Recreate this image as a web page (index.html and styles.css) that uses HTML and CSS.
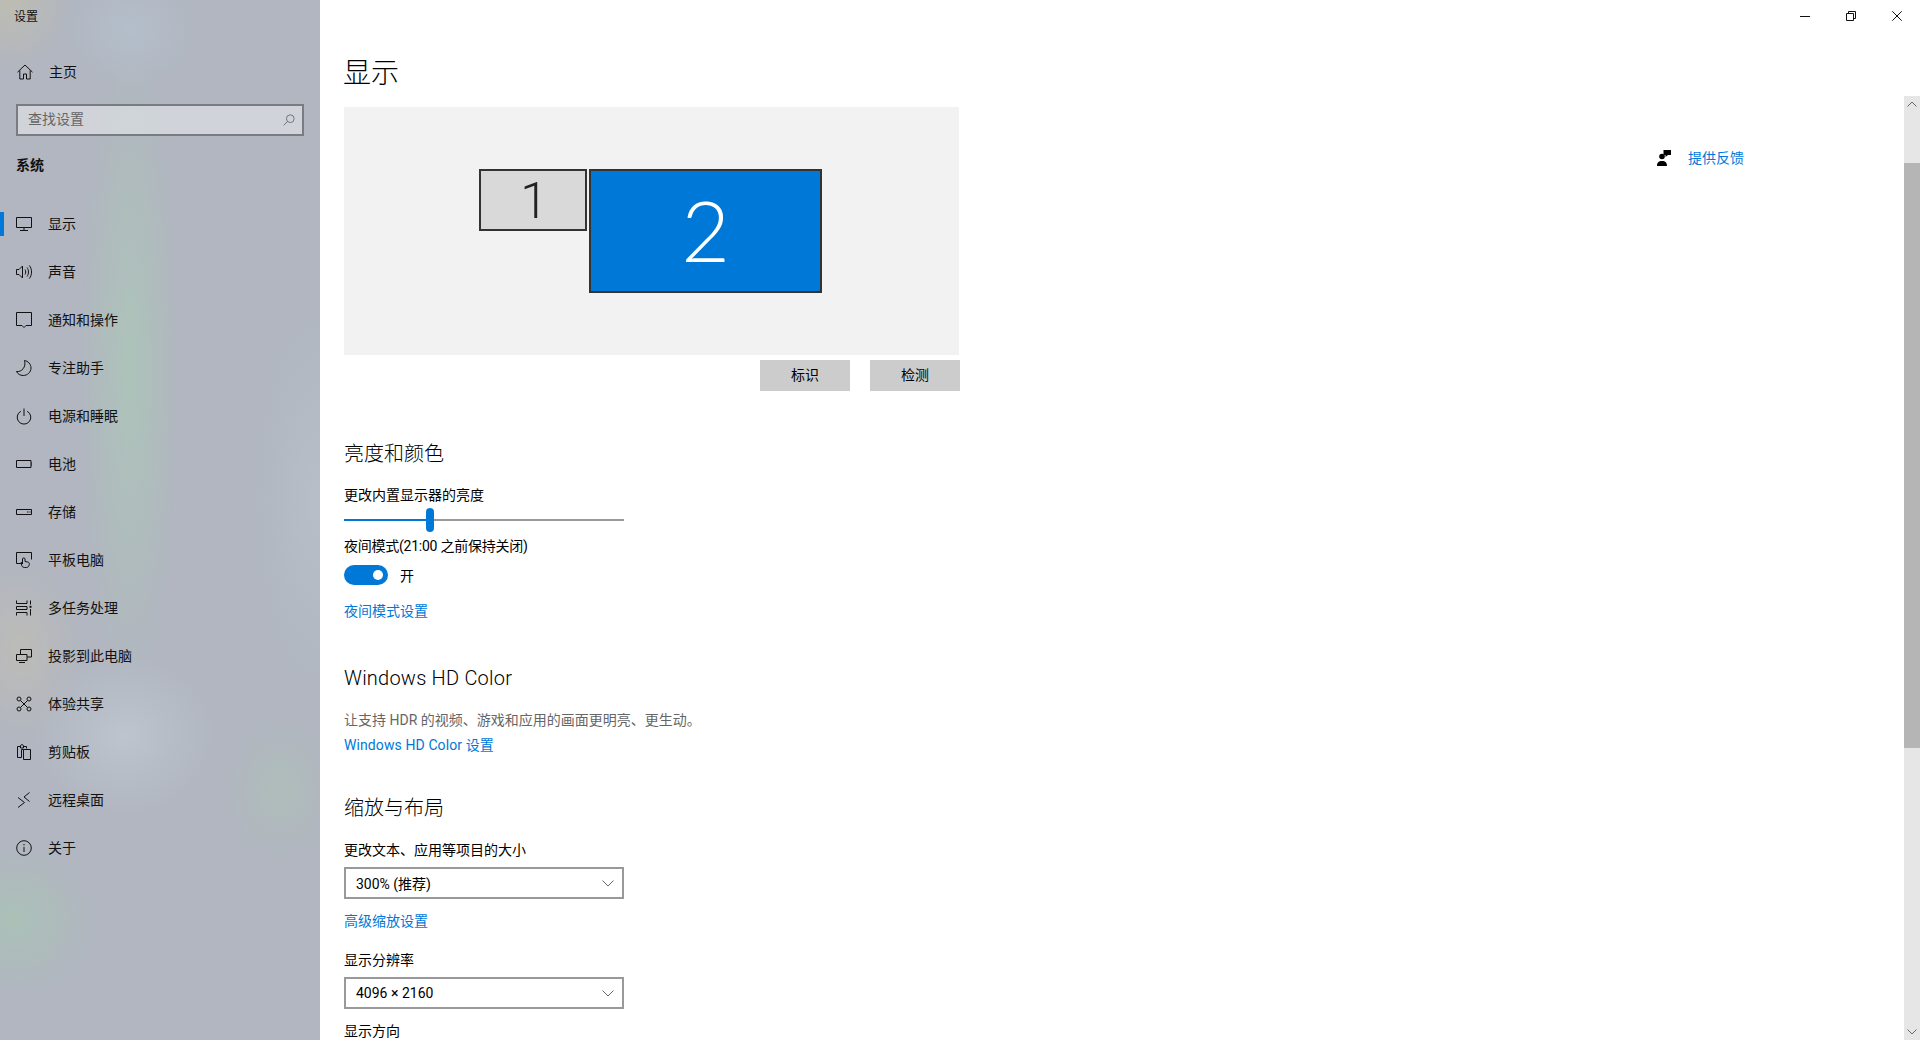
FILE: index.html
```html
<!DOCTYPE html>
<html lang="zh-CN">
<head>
<meta charset="utf-8">
<title>设置</title>
<link rel="stylesheet" href="styles.css">
</head>
<body>
<div class="window">
  <aside class="sidebar">
    <div class="app-title">设置</div>
    <div class="nav-item home-item">
      <svg class="icon" viewBox="0 0 16 16"><path d="M.5 8.2 8 1l7.500 7.200M2.800 6.500V15H6.500V10H9.500V15H13.200V6.500"/></svg>
      <span>主页</span>
    </div>
    <div class="search">
      <span>查找设置</span>
      <svg class="search-icon" viewBox="0 0 14 14"><circle cx="8.500" cy="5.500" r="4.500"/><path d="M5.300 8.700.8 13.200"/></svg>
    </div>
    <div class="group-title">系统</div>
    <nav class="nav">
      <div class="nav-item selected">
        <svg class="icon" viewBox="0 0 16 16"><path d="M.5 1.500h15v10H.5zM8 11.500v3M4 14.500h8"/></svg>
        <span>显示</span>
      </div>
      <div class="nav-item">
        <svg class="icon" viewBox="0 0 16 16"><path d="M.5 5.500h2.500L6.500 2v12L3 10.500H.5zM9 5.500c1 1.500 1 3.500 0 5M11 3.500c2 2.500 2 6.500 0 9M13.300 1.500c3 3.500 3 9.500 0 13"/></svg>
        <span>声音</span>
      </div>
      <div class="nav-item">
        <svg class="icon" viewBox="0 0 16 16"><path d="M.5.5h15v13H10L8 15.500 6 13.500H.5z"/></svg>
        <span>通知和操作</span>
      </div>
      <div class="nav-item">
        <svg class="icon" viewBox="0 0 16 16"><path d="M8.500.5C12 1 15 4.200 15 8c0 4.200-3.500 7.500-7.800 7.500-3 0-5.500-1.500-6.700-4 5 .8 10-4.500 8-11z"/></svg>
        <span>专注助手</span>
      </div>
      <div class="nav-item">
        <svg class="icon" viewBox="0 0 16 16"><path d="M8 .5v7.500M4.800 3.300a6.800 6.800 0 1 0 6.400 0"/></svg>
        <span>电源和睡眠</span>
      </div>
      <div class="nav-item">
        <svg class="icon" viewBox="0 0 16 16"><path d="M.5 4.500h14.500v7H.5zM15 7h1M15 9h1"/></svg>
        <span>电池</span>
      </div>
      <div class="nav-item">
        <svg class="icon" viewBox="0 0 16 16"><path d="M.5 5.500h15v5H.5zM11 8h1.500M13.500 8h1"/></svg>
        <span>存储</span>
      </div>
      <div class="nav-item">
        <svg class="icon" viewBox="0 0 16 16"><path d="M7 11.500H.5V.5h15v7M8.500 15.500c-2 0-3-1.500-3-3.500l-.5-1.500 1.500.5V7c0-1.500 2.500-1.500 2.500 0v2.500l2.500.5c1.500.3 2 1 1.800 2.500-.3 2-1.500 3-3 3z"/></svg>
        <span>平板电脑</span>
      </div>
      <div class="nav-item">
        <svg class="icon" viewBox="0 0 16 16"><path d="M.5.5v3h10.500v-3M.5 15.500v-3h10.500v3M.5 6.500h10.500v3H.5zM14.500.5v4M14.500 9v6.500"/><path class="dot" d="M13.500 5.800h2v2h-2z"/></svg>
        <span>多任务处理</span>
      </div>
      <div class="nav-item">
        <svg class="icon" viewBox="0 0 16 16"><path d="M4.500 6V1.500h11v7.500H11M.5 6.500H11v6H.5zM3 14.500h6"/></svg>
        <span>投影到此电脑</span>
      </div>
      <div class="nav-item">
        <svg class="icon" viewBox="0 0 16 16"><circle cx="3" cy="3" r="2"/><circle cx="13" cy="3" r="2"/><circle cx="3" cy="13" r="2"/><circle cx="13" cy="13" r="2"/><path d="M4.500 4.500l7 7M11.500 4.500l-7 7"/></svg>
        <span>体验共享</span>
      </div>
      <div class="nav-item">
        <svg class="icon" viewBox="0 0 16 16"><path d="M5.500 13.500H1.500V2.500h3M7 2.500h3.500v2M4.500 4V1.500L6 .5l1.500 1V4zM7.500 5.500h7v10h-7zM5.500 13.500v-8h2"/></svg>
        <span>剪贴板</span>
      </div>
      <div class="nav-item">
        <svg class="icon" viewBox="0 0 16 16"><path d="M2 5.500l6.500 5L2 15.500M13.500.5L8 5l5.500 4.500"/></svg>
        <span>远程桌面</span>
      </div>
      <div class="nav-item">
        <svg class="icon" viewBox="0 0 16 16"><circle cx="8" cy="8" r="7.300"/><path d="M8 7v5M8 4v1.500"/></svg>
        <span>关于</span>
      </div>
    </nav>
  </aside>

  <div class="main">
    <header class="titlebar">
      <div class="win-btn"><svg viewBox="0 0 10 10"><path d="M0 5.500h10"/></svg></div>
      <div class="win-btn"><svg viewBox="0 0 10 10"><path d="M.5 2.500h7v7h-7zM2.500 2.500v-2h7v7h-2"/></svg></div>
      <div class="win-btn"><svg viewBox="0 0 10 10"><path d="M.3.3l9.400 9.400M9.700.3L.3 9.700"/></svg></div>
    </header>
    <div class="page">
      <main class="content">
        <h1>显示</h1>
        <div class="monitors">
          <div class="monitor small">1</div>
          <div class="monitor big">2</div>
        </div>
        <div class="monitor-actions">
          <div class="btn">标识</div>
          <div class="btn">检测</div>
        </div>

        <h2 class="first">亮度和颜色</h2>
        <div class="line after-h2">更改内置显示器的亮度</div>
        <div class="slider">
          <div class="slider-fill"></div>
          <div class="slider-thumb"></div>
          <div class="slider-rest"></div>
        </div>
        <div class="line after-slider tight">夜间模式(21:00 之前保持关闭)</div>
        <div class="toggle-row">
          <div class="toggle"><div class="knob"></div></div>
          <span>开</span>
        </div>
        <div class="line link after-toggle">夜间模式设置</div>

        <h2 class="hd">Windows HD Color</h2>
        <div class="line muted after-hd">让支持 HDR 的视频、游戏和应用的画面更明亮、更生动。</div>
        <div class="line link after-desc hd-link">Windows HD Color 设置</div>

        <h2 class="scale">缩放与布局</h2>
        <div class="line after-scale-title">更改文本、应用等项目的大小</div>
        <div class="select">
          <span>300% (推荐)</span>
          <svg viewBox="0 0 12 7"><path d="M.5.5L6 6l5.500-5.500"/></svg>
        </div>
        <div class="line link after-select">高级缩放设置</div>
        <div class="line after-scale-link">显示分辨率</div>
        <div class="select">
          <span>4096 × 2160</span>
          <svg viewBox="0 0 12 7"><path d="M.5.5L6 6l5.500-5.500"/></svg>
        </div>
        <div class="line after-select">显示方向</div>
      </main>
      <aside class="feedback">
        <svg class="feedback-icon" viewBox="0 0 14 16"><circle cx="5" cy="6.500" r="2.800"/><path d="M0 16c0-3.500 1.500-5 5-5s5 1.500 5 5zM6.500 0H14v5h-3L8.500 7V5H6.500z"/></svg>
        <span class="link">提供反馈</span>
      </aside>
      <div class="scrollbar">
        <div class="sb-top"><svg viewBox="0 0 10 6"><path d="M.5 5.500L5 1l4.500 4.500"/></svg></div>
        <div class="sb-thumb"></div>
        <div class="sb-bottom"><svg viewBox="0 0 10 6"><path d="M.5.5L5 5 9.500.5"/></svg></div>
      </div>
    </div>
  </div>
</div>
</body>
</html>
```

FILE: styles.css
```css
* { box-sizing: border-box; }
html, body { margin: 0; height: 100%; overflow: hidden; }
body {
  font-family: Roboto, "Noto Sans CJK SC", sans-serif;
  font-size: 14px;
  color: #000;
  background: #fff;
}
.window { display: flex; width: 1920px; height: 1040px; overflow: hidden; }

/* Sidebar */
.sidebar {
  width: 320px;
  flex: none;
  display: flex;
  flex-direction: column;
  color: #111;
  background:
    radial-gradient(ellipse 60px 70px at 10px 0, rgba(192,190,176,.85), rgba(192,190,176,0)),
    radial-gradient(ellipse 70px 60px at 130px 30px, rgba(180,194,206,.7), rgba(180,194,206,0)),
    radial-gradient(ellipse 50px 320px at 130px 370px, rgba(172,198,184,.85), rgba(172,198,184,0)),
    radial-gradient(ellipse 90px 80px at 125px 735px, rgba(194,202,212,.7), rgba(194,202,212,0)),
    radial-gradient(ellipse 60px 90px at 20px 650px, rgba(192,190,180,.75), rgba(192,190,180,0)),
    radial-gradient(ellipse 80px 75px at 15px 920px, rgba(170,194,182,.9), rgba(170,194,182,0)),
    radial-gradient(ellipse 55px 70px at 280px 790px, rgba(174,192,184,.75), rgba(174,192,184,0)),
    radial-gradient(ellipse 70px 200px at 320px 500px, rgba(184,194,204,.7), rgba(184,194,204,0)),
    #b1b6c0;
}
.app-title { height: 32px; line-height: 34px; padding-left: 14px; font-size: 12px; }
.nav-item {
  position: relative;
  display: flex;
  align-items: center;
  gap: 16px;
  height: 48px;
  padding-left: 16px;
}
.nav-item span { padding-bottom: 2px; }
.home-item { margin-top: 16px; padding-left: 17px; }
.icon { width: 16px; height: 16px; flex: none; fill: none; stroke: #111; stroke-width: 1; overflow: visible; }
.icon .dot { fill: #111; stroke: none; }
.selected::before {
  content: "";
  position: absolute;
  left: 0;
  top: 12px;
  width: 4px;
  height: 24px;
  background: #0078d7;
}
.search {
  display: flex;
  align-items: center;
  justify-content: space-between;
  height: 32px;
  margin: 8px 16px 0;
  padding: 0 7px 0 10px;
  border: 2px solid #797c80;
  background: rgba(255,255,255,.4);
  color: #666;
}
.search span { padding-bottom: 4px; }
.search-icon { width: 12px; height: 12px; fill: none; stroke: #666; }
.group-title { margin: 20px 0 0 16px; height: 20px; line-height: 19px; font-weight: 700; }
.nav { margin-top: 24px; }

/* Main */
.main { flex: 1; display: flex; flex-direction: column; min-width: 0; }
.titlebar { display: flex; justify-content: flex-end; height: 32px; flex: none; }
.win-btn { width: 46px; height: 32px; display: flex; align-items: center; justify-content: center; }
.win-btn svg { width: 10px; height: 10px; fill: none; stroke: #111; stroke-width: 1; }
.page { flex: 1; display: flex; min-height: 0; }
.content { flex: 1; padding-left: 24px; min-width: 0; }
h1, h2 { margin: 0; font-weight: 400; }
h1 { margin: 22px 0 0 -1px; height: 40px; line-height: 40px; font-size: 28px; font-weight: 300; }
.monitors {
  display: flex;
  align-items: flex-start;
  gap: 2px;
  width: 615px;
  height: 248px;
  margin-top: 13px;
  padding: 62px 0 0 135px;
  background: #f2f2f2;
}
.monitor {
  display: flex;
  align-items: center;
  justify-content: center;
  border: 2px solid #333;
  font-weight: 300;
}
.small {
  width: 108px;
  height: 62px;
  padding: 1px 0 0 2px;
  background: #d9d9d9;
  font-family: Roboto, sans-serif;
  font-size: 50px;
  color: #222;
}
.big {
  width: 233px;
  height: 124px;
  padding-bottom: 4px;
  background: #0078d7;
  font-family: Lato, sans-serif;
  font-size: 84px;
  color: #fff;
}
.monitor-actions { display: flex; gap: 20px; margin-top: 5px; width: 616px; justify-content: flex-end; }
.btn { width: 90px; height: 31px; line-height: 31px; text-align: center; background: #ccc; }
h2 { height: 30px; line-height: 30px; font-size: 20px; font-weight: 300; }
h2.first { margin-top: 48px; }
h2.hd { margin-top: 41px; letter-spacing: .22px; }
h2.scale { margin-top: 37px; }
.line { height: 20px; line-height: 18px; }
.link { color: #0078d7; }
.muted { color: #666; }
.tight { letter-spacing: -.25px; }
.hd-link { letter-spacing: .1px; }
.after-h2 { margin-top: 17px; }
.after-scale-title { margin-top: 18px; }
.after-slider { margin-top: 5px; }
.after-toggle { margin-top: 17px; }
.after-hd { margin-top: 18px; }
.after-desc { margin-top: 5px; }
.after-select { margin-top: 13px; }
.after-scale-link { margin-top: 19px; }
.slider { display: flex; align-items: center; width: 280px; height: 24px; margin-top: 2px; }
.slider-fill { width: 82px; height: 2px; background: #0078d7; }
.slider-thumb { width: 8px; height: 24px; border-radius: 4px; background: #0078d7; }
.slider-rest { flex: 1; height: 2px; background: #999; }
.toggle-row { display: flex; align-items: center; gap: 12px; height: 20px; margin-top: 8px; }
.toggle {
  display: flex;
  align-items: center;
  justify-content: flex-end;
  width: 44px;
  height: 20px;
  padding-right: 5px;
  border-radius: 10px;
  background: #0078d7;
}
.knob { width: 10px; height: 10px; border-radius: 50%; background: #fff; }
.select {
  display: flex;
  align-items: center;
  justify-content: space-between;
  width: 280px;
  height: 32px;
  margin-top: 6px;
  padding: 0 8px 0 10px;
  border: 2px solid #999;
}
.select svg { width: 12px; height: 7px; fill: none; stroke: #666; overflow: visible; }
.feedback {
  display: flex;
  align-items: center;
  gap: 17px;
  width: 247px;
  height: 20px;
  margin-top: 116px;
  flex: none;
}
.feedback span { padding-bottom: 2px; }
.feedback-icon { width: 14px; height: 16px; fill: #000; }
.scrollbar {
  width: 16px;
  flex: none;
  margin-top: 64px;
  display: flex;
  flex-direction: column;
  background: #e6e6e6;
}
.scrollbar svg { width: 10px; height: 6px; fill: none; stroke: #666; overflow: visible; }
.sb-top { height: 67px; display: flex; justify-content: center; padding-top: 5px; }
.sb-thumb { height: 585px; background: #b5b5b5; }
.sb-bottom { flex: 1; display: flex; justify-content: center; align-items: flex-end; padding-bottom: 5px; }
```
